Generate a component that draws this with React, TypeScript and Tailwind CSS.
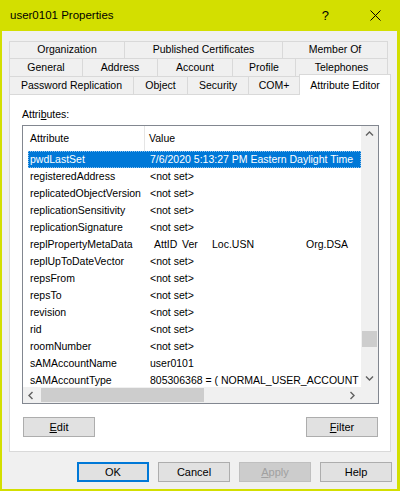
import React from "react";

type Row = { name: string; value: React.ReactNode };

const rows: Row[] = [
  { name: "pwdLastSet", value: "7/6/2020 5:13:27 PM Eastern Daylight Time" },
  { name: "registeredAddress", value: "<not set>" },
  { name: "replicatedObjectVersion", value: "<not set>" },
  { name: "replicationSensitivity", value: "<not set>" },
  { name: "replicationSignature", value: "<not set>" },
  {
    name: "replPropertyMetaData",
    value: (
      <span className="flex">
        <span className="ml-[4px] w-[28px]">AttID</span>
        <span className="w-[30px]">Ver</span>
        <span className="w-[94px]">Loc.USN</span>
        <span>Org.DSA</span>
      </span>
    ),
  },
  { name: "replUpToDateVector", value: "<not set>" },
  { name: "repsFrom", value: "<not set>" },
  { name: "repsTo", value: "<not set>" },
  { name: "revision", value: "<not set>" },
  { name: "rid", value: "<not set>" },
  { name: "roomNumber", value: "<not set>" },
  { name: "sAMAccountName", value: "user0101" },
  { name: "sAMAccountType", value: "805306368 = ( NORMAL_USER_ACCOUNT )" },
];

const tabRows: { label: string; w: string }[][] = [
  [
    { label: "Organization", w: "w-[115px]" },
    { label: "Published Certificates", w: "w-[158px]" },
    { label: "Member Of", w: "w-[106px]" },
  ],
  [
    { label: "General", w: "w-[73px]" },
    { label: "Address", w: "w-[75px]" },
    { label: "Account", w: "w-[75px]" },
    { label: "Profile", w: "w-[63px]" },
    { label: "Telephones", w: "w-[93px]" },
  ],
];

const lastRow = [
  { label: "Password Replication", w: "w-[124px]" },
  { label: "Object", w: "w-[54px]" },
  { label: "Security", w: "w-[61px]" },
  { label: "COM+", w: "w-[51px]" },
];

function Chevron({ dir }: { dir: "up" | "down" | "left" | "right" }) {
  const pts = {
    up: "1,5.5 4.5,2 8,5.5",
    down: "1,2.5 4.5,6 8,2.5",
    left: "5.5,1 2,4.5 5.5,8",
    right: "2.5,1 6,4.5 2.5,8",
  }[dir];
  return (
    <svg width="9" height="9" viewBox="0 0 9 9">
      <polyline points={pts} fill="none" stroke="#606060" strokeWidth="1.4" />
    </svg>
  );
}

function Button({
  children,
  variant = "normal",
}: {
  children: React.ReactNode;
  variant?: "normal" | "default" | "disabled";
}) {
  const look =
    variant === "default"
      ? "border-[#0078d7] bg-[#e1e1e1] text-black shadow-[inset_0_0_0_1px_#0078d7]"
      : variant === "disabled"
        ? "border-[#bfbfbf] bg-[#cccccc] text-[#a0a0a0]"
        : "border-[#adadad] bg-[#e1e1e1] text-black";
  return (
    <div className={`flex h-[20px] w-[72px] items-center justify-center border text-[11px] ${look}`}>
      {children}
    </div>
  );
}

export default function App() {
  return (
    <div className="flex h-[491px] w-[400px] flex-col bg-[#d3df00] pb-[2px] pl-[2px] pr-[3px] font-['Liberation_Sans',Arial,sans-serif] text-black">
      {/* title bar */}
      <div className="flex h-[31px] items-center">
        <span className="ml-[8px] text-[11.5px]">user0101 Properties</span>
        <span className="ml-auto mr-[41px] text-[13px]">?</span>
        <svg width="11" height="11" viewBox="0 0 11 11" className="mr-[16px]">
          <path d="M0.5 0.5 L10.5 10.5 M10.5 0.5 L0.5 10.5" stroke="#000" strokeWidth="1" />
        </svg>
      </div>

      {/* client */}
      <div className="flex flex-1 flex-col bg-[#f0f0f0] pl-[7px] pt-[10px] text-[10.5px]">
        <div className="flex flex-col">
          {tabRows.map((row, i) => (
            <div key={i} className={`flex ${i === 0 ? "h-[17px]" : "h-[18px]"}`}>
              {row.map((t, j) => (
                <div
                  key={t.label}
                  className={`flex items-center justify-center border-l border-t border-[#d9d9d9] ${t.w} ${
                    j === row.length - 1 ? "border-r" : ""
                  }`}
                >
                  {t.label}
                </div>
              ))}
            </div>
          ))}
          <div className="flex h-[18px] items-end">
            {lastRow.map((t) => (
              <div
                key={t.label}
                className={`flex h-[18px] items-center justify-center border-l border-t border-[#d9d9d9] ${t.w}`}
              >
                {t.label}
              </div>
            ))}
            <div className="relative z-10 mb-[-1px] flex h-[21px] w-[92px] items-start justify-center border-x border-t border-[#d9d9d9] bg-white pt-[3px]">
              Attribute Editor
            </div>
          </div>
        </div>

        {/* tab page */}
        <div className="flex h-[358px] w-[382px] flex-col border border-[#d9d9d9] bg-white pl-[12px] pr-[11px]">
          <div className="mt-[13px] mb-[4px] h-[13px] leading-[13px]">
            Attri<span className="underline">b</span>utes:
          </div>

          <div className="flex h-[279px] w-[357px] flex-col border border-[#828790]">
            <div className="flex h-[261px]">
              <div className="flex flex-1 flex-col overflow-hidden">
                <div className="flex h-[25px] shrink-0 items-center">
                  <div className="h-full w-[122px] border-r border-[#e5e5e5] pl-[7px] leading-[25px]">Attribute</div>
                  <div className="pl-[4px]">Value</div>
                </div>
                {rows.map((r, i) => (
                  <div key={r.name} className="flex h-[17px] shrink-0 whitespace-nowrap">
                    <div
                      className={`ml-[5px] flex flex-1 items-center ${
                        i === 0 ? "border border-dotted border-[#8cc1ee] bg-[#0078d7] text-white" : ""
                      }`}
                    >
                      <div className={`${i === 0 ? "w-[116px] pl-[1px]" : "w-[117px] pl-[2px]"}`}>{r.name}</div>
                      <div className="pl-[5px]">{r.value}</div>
                    </div>
                  </div>
                ))}
              </div>
              {/* vertical scrollbar */}
              <div className="flex w-[17px] flex-col bg-[#f0f0f0]">
                <div className="flex h-[17px] items-center justify-center">
                  <Chevron dir="up" />
                </div>
                <div className="flex flex-1 flex-col">
                  <div className="mx-[1px] mt-[188px] h-[16px] bg-[#cdcdcd]" />
                </div>
                <div className="flex h-[17px] items-center justify-center">
                  <Chevron dir="down" />
                </div>
              </div>
            </div>
            {/* horizontal scrollbar */}
            <div className="flex h-[16px]">
              <div className="flex flex-1 bg-[#f0f0f0]">
                <div className="flex w-[17px] items-center justify-center">
                  <Chevron dir="left" />
                </div>
                <div className="flex flex-1 items-center">
                  <div className="ml-[1px] h-[14px] w-[163px] bg-[#cdcdcd]" />
                </div>
                <div className="flex w-[17px] items-center justify-center">
                  <Chevron dir="right" />
                </div>
              </div>
              <div className="w-[17px] bg-[#f0f0f0]" />
            </div>
          </div>

          <div className="mt-[13px] flex justify-between pl-[1px] pr-[1px]">
            <Button>
              <span className="underline">E</span>dit
            </Button>
            <Button>
              <span className="underline">F</span>ilter
            </Button>
          </div>
        </div>

        {/* dialog buttons */}
        <div className="mt-[10px] flex justify-end gap-[9px] pr-[5px]">
          <Button variant="default">OK</Button>
          <Button>Cancel</Button>
          <Button variant="disabled">
            <span className="underline">A</span>pply
          </Button>
          <Button>Help</Button>
        </div>
      </div>
    </div>
  );
}
